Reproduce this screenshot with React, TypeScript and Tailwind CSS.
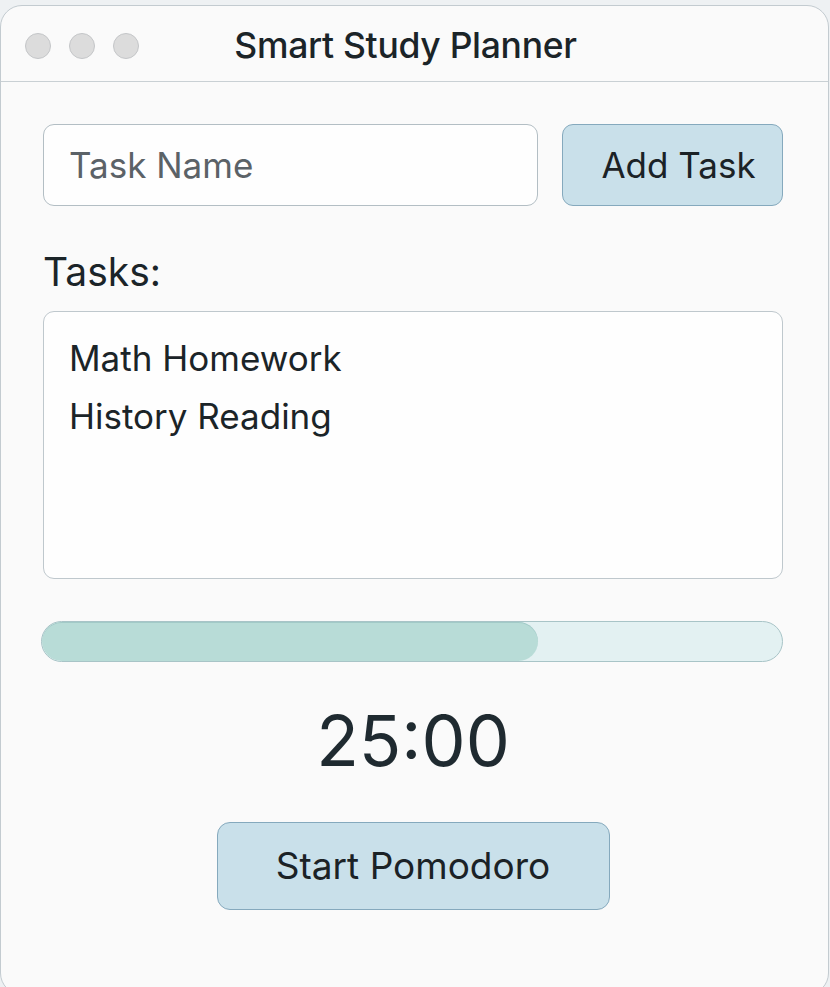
export default function App() {
  const progress = 67;
  return (
    <div
      className="h-[987px] w-[830px] overflow-hidden bg-[#eef1f3] pt-[5px] text-[#1b2428]"
      style={{ fontFamily: "Inter, 'Noto Sans', sans-serif" }}
    >
      <div className="h-[990px] w-[829px] rounded-[22px] border border-[#c3cbd0] bg-[#fafafa]">
        {/* title bar */}
        <div className="flex h-[76px] items-center border-b border-[#c9d0d4] pl-[24px] pt-[4px]">
          <div className="flex gap-[18px]">
            <span className="h-[26px] w-[26px] rounded-full border border-[#c4c6c8] bg-[#dcdcdc]" />
            <span className="h-[26px] w-[26px] rounded-full border border-[#c4c6c8] bg-[#dcdcdc]" />
            <span className="h-[26px] w-[26px] rounded-full border border-[#c4c6c8] bg-[#dcdcdc]" />
          </div>
          <div className="flex-1 pr-[156px] text-center text-[35.5px] font-medium tracking-[-0.3px]">
            Smart Study Planner
          </div>
        </div>

        <div className="pl-[42px] pr-[45px]">
          {/* input row */}
          <div className="mt-[42px] flex gap-[24px]">
            <div className="flex h-[82px] w-[495px] items-center rounded-[11px] border border-[#b3bec4] bg-[#fefefe] pl-[25px] text-[35px] text-[#5b6267]">
              Task Name
            </div>
            <button className="h-[82px] flex-1 rounded-[11px] border border-[#85a9bd] bg-[#c9e0ea] pl-[12px] text-[35px] text-[#1b2226]">
              Add Task
            </button>
          </div>

          <div className="mt-[44px] text-[39px] leading-[44px]">Tasks:</div>

          {/* task list */}
          <div className="mt-[17px] h-[268px] rounded-[11px] border border-[#bfc8cd] bg-[#fefefe] px-[25px] pt-[17px] text-[35px] leading-[58px]">
            <div>Math Homework</div>
            <div>History Reading</div>
          </div>

          {/* progress */}
          <div className="-ml-[2px] mt-[42px] h-[41px] overflow-hidden rounded-full border border-[#a8c4c7] bg-[#e3f1f2]">
            <div
              className="h-full rounded-full bg-[#b8dcd7] shadow-[inset_0_1px_0_rgba(120,170,170,0.35)]"
              style={{ width: `${progress}%` }}
            />
          </div>

          <div className="mt-[39px] text-center text-[70px] leading-[80px] text-[#1f2a30]">25:00</div>

          <div className="mt-[41px] flex justify-center">
            <button className="h-[88px] w-[393px] rounded-[13px] border border-[#85a9bd] bg-[#c9e0ea] text-[37px] text-[#1b2226]">
              Start Pomodoro
            </button>
          </div>
        </div>
      </div>
    </div>
  );
}
